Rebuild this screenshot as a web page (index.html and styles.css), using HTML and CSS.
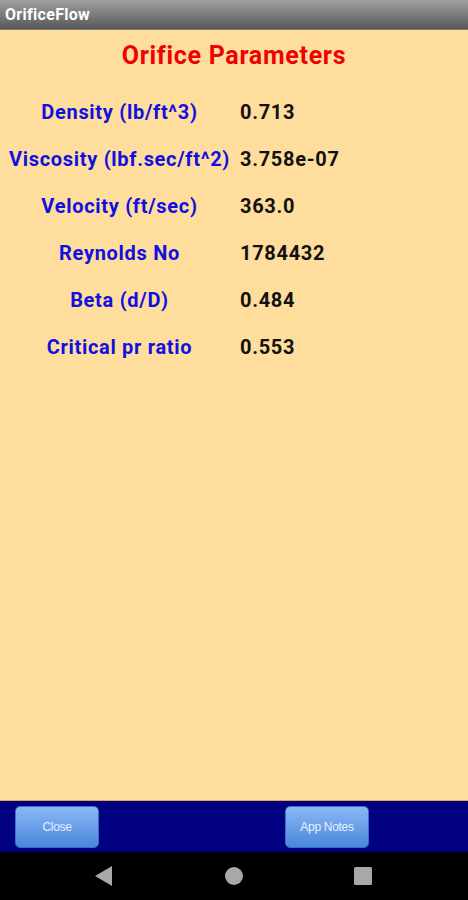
FILE: index.html
```html
<!DOCTYPE html>
<html>
  <head>
    <meta charset="UTF-8" />
    <title>OrificeFlow</title>
    <link rel="stylesheet" href="styles.css">
  </head>
  <body>
    <div class="app">
      <div class="title-bar">OrificeFlow</div>
      <div class="content">
        <h1>Orifice Parameters</h1>
        <div class="params">
          <div class="row"><span class="label">Density (lb/ft^3)</span><span class="value">0.713</span></div>
          <div class="row"><span class="label">Viscosity (lbf.sec/ft^2)</span><span class="value">3.758e-07</span></div>
          <div class="row"><span class="label">Velocity (ft/sec)</span><span class="value">363.0</span></div>
          <div class="row"><span class="label">Reynolds No</span><span class="value">1784432</span></div>
          <div class="row"><span class="label">Beta (d/D)</span><span class="value">0.484</span></div>
          <div class="row"><span class="label">Critical pr ratio</span><span class="value">0.553</span></div>
        </div>
      </div>
      <div class="button-bar">
        <button class="btn btn-close">Close</button>
        <button class="btn btn-notes">App Notes</button>
      </div>
      <div class="nav-bar">
        <svg width="20" height="22" viewBox="0 0 20 22"><polygon points="18,1 18,21 1,11" fill="#a8a8a8"/></svg>
        <svg width="20" height="20" viewBox="0 0 20 20"><circle cx="10" cy="10" r="9" fill="#a8a8a8"/></svg>
        <svg width="20" height="20" viewBox="0 0 20 20"><rect x="1" y="1" width="18" height="18" rx="1.5" fill="#a8a8a8"/></svg>
      </div>
    </div>
  </body>
</html>
```

FILE: styles.css
```css
* {
  margin: 0;
  padding: 0;
  box-sizing: border-box;
}
body {
  font-family: Roboto, "Liberation Sans", Arial, sans-serif;
  width: 468px;
  height: 900px;
  overflow: hidden;
}
.app {
  display: flex;
  flex-direction: column;
  height: 900px;
}
.title-bar {
  height: 30px;
  background: linear-gradient(#a0a0a0, #575757);
  color: #fff;
  font-weight: bold;
  font-size: 16px;
  letter-spacing: 0.3px;
  line-height: 30px;
  padding-left: 5px;
  border-bottom: 1px solid #7a7a7a;
}
.content {
  flex: 1;
  background: #ffdd9d;
  border-bottom: 1px solid #e8a050;
}
h1 {
  color: #f00000;
  font-size: 25px;
  letter-spacing: 0.7px;
  font-weight: bold;
  text-align: center;
  margin-top: 11px;
  line-height: 30px;
}
.params {
  margin-top: 17px;
}
.row {
  display: flex;
  align-items: center;
  height: 47px;
  font-size: 20px;
  letter-spacing: 0.7px;
  font-weight: bold;
}
.label {
  width: 239px;
  text-align: center;
  color: #1010e0;
}
.value {
  color: #111;
  padding-left: 1px;
}
.button-bar {
  height: 51px;
  background: #000080;
  display: flex;
  align-items: center;
  padding-left: 15px;
}
.btn {
  height: 42px;
  width: 84px;
  border: 1px solid #3a6fd0;
  border-radius: 5px;
  background: linear-gradient(#8ab8f5, #4a86dc);
  color: #e8f0ff;
  font-family: "Liberation Sans", Arial, sans-serif;
  font-size: 12px;
  letter-spacing: -0.3px;
}
.btn-notes {
  margin-left: 186px;
}
.nav-bar {
  height: 48px;
  background: #000;
  display: flex;
  align-items: center;
  justify-content: space-between;
  padding: 0 95px 0 94px;
}
```
